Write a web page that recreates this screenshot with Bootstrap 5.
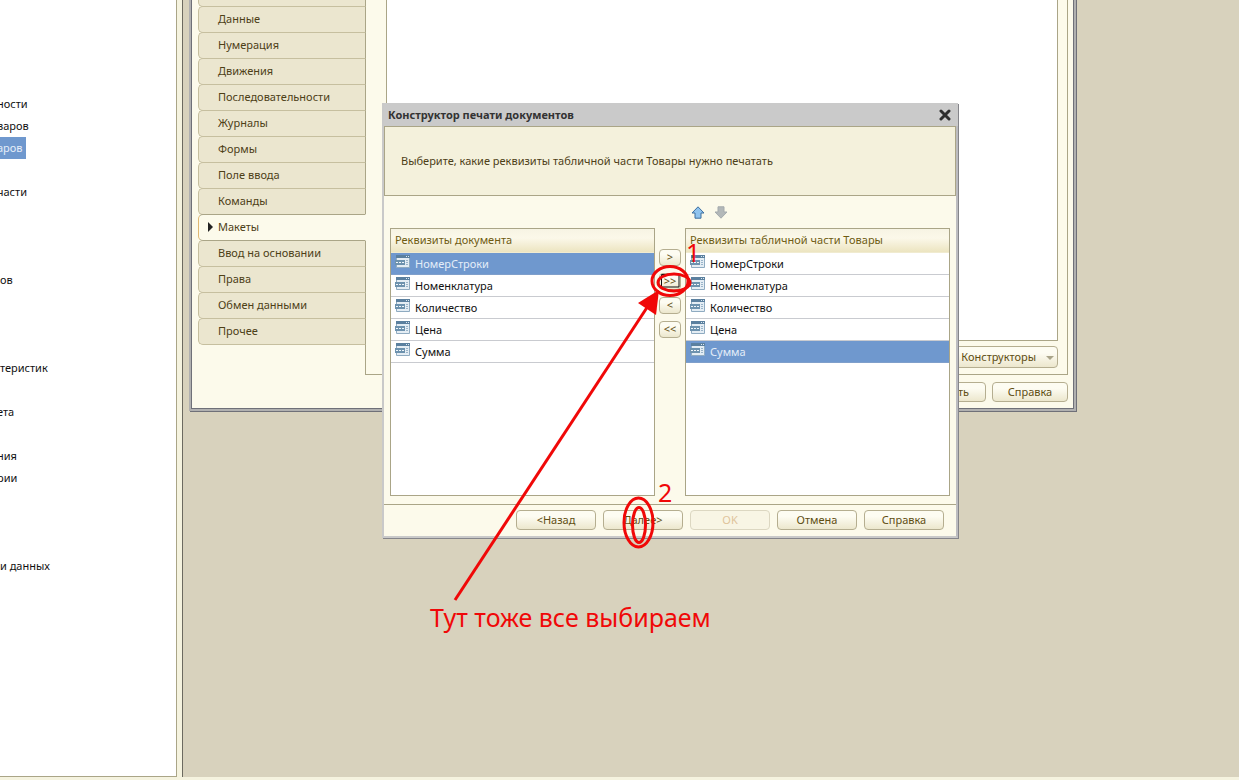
<!DOCTYPE html>
<html lang="ru">
<head>
<meta charset="utf-8">
<meta name="viewport" content="width=device-width, initial-scale=1">
<title>Конструктор печати документов</title>
<link href="https://cdn.jsdelivr.net/npm/bootstrap@5.3.0/dist/css/bootstrap.min.css" rel="stylesheet">
<style>
:root{--cream:#fcfaeb;--line:#aaa587;--ink:#4d4017;--sel:#6f98ce}
body{font-family:"Noto Sans",sans-serif;font-size:11px;line-height:16px;color:var(--ink);background:#f5f3df;padding-bottom:3px}
a{color:inherit;text-decoration:none}
.tree-pane{width:177px;border-right:1px solid var(--line);border-bottom:1px solid var(--line);background:#fff;color:#111;padding-top:93px}
.tree-pane a{display:block;width:max-content;height:22px;line-height:22px;padding-right:3px;white-space:nowrap}
.tree-pane a.outer{margin-left:-3px}
.tree-pane a.chosen{background:var(--sel);color:#e4edf8}
.desktop{background:#d8d2bd;border-left:1px solid #6c6a60;margin-left:5px}
.win{position:absolute;background:var(--cream)}
.main-win{left:6px;top:-22px;width:887px;height:433px;border:2px solid #b0b0b0;box-shadow:inset 0 0 0 1px #6f7078,1px 1px 0 #6f7078;padding:0 6px 7px 7px}
.tab-list{width:167px}
.tab-list a{display:block;height:27px;margin-bottom:-1px;line-height:24px;padding-left:19px;background:#ebe6cf;border:1px solid #c6bf9f;border-right-color:var(--line);border-radius:5px 0 0 5px;width:168px;position:relative}
.tab-list a.current{background:var(--cream);border-color:var(--line) var(--cream) var(--line) #e0b873;z-index:1}
.tab-list a.current::before{content:"";position:absolute;left:9px;top:7px;border:5px solid transparent;border-left-color:#222;border-right:0}
.tab-page{border:1px solid var(--line);padding:0 9px 6px 20px}
.tab-box{border:1px solid var(--line);background:#fff}
.btn1c{font-size:11px;line-height:16px;height:20px;padding:0 4px 1px;color:#5f4e12;border:1px solid #b5ae90;border-radius:4px;background:linear-gradient(#fdfcf2 30%,#ece7cd);white-space:nowrap}
.btn1c:disabled{color:#dfc49b;border-color:#dcd7c1;background:#f8f5e4;opacity:1}
.wide{width:76px}
.drop{height:22px;width:110px;text-align:right;padding-right:3px}
.drop-row{padding-top:5px;line-height:0}
.main-foot{gap:6px;padding-top:7px}
.caret-dn{display:inline-block;border:4px solid transparent;border-top-color:#a9a489;border-bottom:0;margin-left:7px;vertical-align:1px}
.dialog1c{left:199px;top:103px;width:576px;border:2px solid #c9c9c9;border-top:0;border-right-color:#bcbcc0;box-shadow:1px 1px 0 #85858a;z-index:3;padding-bottom:6px}
.title-bar{height:23px;background:#cacaca;color:#333;font-weight:700;padding:0 4px;margin-right:-2px}
.title-bar button{border:0;background:none;padding:0;line-height:0;margin-right:3px}
.intro{height:70px;border:1px solid var(--line);background:#f4f1dc;padding-left:16px}
.tools{height:32px;padding:10px 0 0 306px}
.tools button{border:0;background:none;padding:0;width:15px;height:13px;line-height:0}
.panels{padding:0 6px 8px}
.grid1c{flex:1 1 0;height:268px;border:1px solid var(--line);background:#fff}
.grid1c table{width:100%;border-collapse:separate;border-spacing:0}
.grid1c th{height:24px;padding:0 4px 2px;font-weight:400;color:#6f5c12;background:linear-gradient(#f7f4e4,#fbf8e9 40%,#ece4c0);border-bottom:1px solid #f0ebd0}
.grid1c td{height:22px;padding:0 4px;color:#111;border-bottom:1px solid #c9cbd0;line-height:20px}
.grid1c td svg{display:block;margin:-4px 5px 0 0}
.grid1c tr.chosen td{background:var(--sel);color:#e4edf8;border-color:#7f9fcb}
.movers{width:30px;padding:21px 4px 0;gap:7px}
.movers button{width:22px;height:17px;line-height:13px;padding:0 0 2px}
.foot{border-top:1px solid var(--line);padding:5px 12px 0 0;gap:7px}
.foot .btn1c{width:80px}
.notes{position:absolute;left:0;top:0;z-index:5;pointer-events:none}
</style>
</head>
<body class="vh-100 overflow-hidden d-flex flex-column">
<svg width="0" height="0" class="position-absolute" aria-hidden="true">
  <symbol id="attr" viewBox="0 0 15 13">
    <path d="M1.500 1H14.500V12.500H1.500Z" fill="#e4edf4" stroke="#8fabc1"/>
    <path d="M1 0H15V3H1Z" fill="#5b809f"/><path d="M11 1h1v1h-1zM13 1h1v1h-1z" fill="#dce9f3"/>
    <path d="M0 5H10V10H0Z" fill="#6d92ae"/><path d="M1 7h2v1H1zM4 7h2v1H4zM7 7h2v1H7z" fill="#f0f6fa"/>
    <path d="M11 5h2v1h-2zM11 7h2v1h-2zM11 9h2v1h-2z" fill="#9ab4c9"/>
  </symbol>
</svg>
<div class="d-flex flex-grow-1">
  <nav class="tree-pane flex-shrink-0 overflow-hidden" aria-label="Конфигурация">
    <a href="#" class="outer">ности</a><a href="#" class="outer">варов</a><a href="#" class="outer chosen">аров</a><a href="#">&nbsp;</a><a href="#" class="outer">части</a>
    <a href="#">&nbsp;</a><a href="#">&nbsp;</a><a href="#">&nbsp;</a><a href="#">ов</a><a href="#">&nbsp;</a><a href="#">&nbsp;</a><a href="#">&nbsp;</a>
    <a href="#">теристик</a><a href="#">&nbsp;</a><a href="#" class="outer">ета</a><a href="#">&nbsp;</a><a href="#" class="outer">ния</a><a href="#" class="outer">рии</a>
    <a href="#">&nbsp;</a><a href="#">&nbsp;</a><a href="#">&nbsp;</a><a href="#">и данных</a>
  </nav>
  <main class="desktop flex-grow-1 position-relative overflow-hidden">
    <section class="win main-win d-flex flex-column">
      <div class="d-flex flex-grow-1">
        <nav class="tab-list flex-shrink-0">
          <a href="#">&nbsp;</a><a href="#">Данные</a><a href="#">Нумерация</a><a href="#">Движения</a><a href="#">Последовательности</a><a href="#">Журналы</a><a href="#">Формы</a><a href="#">Поле ввода</a><a href="#">Команды</a><a href="#" class="current">Макеты</a><a href="#">Ввод на основании</a><a href="#">Права</a><a href="#">Обмен данными</a><a href="#">Прочее</a>
        </nav>
        <div class="tab-page flex-grow-1 d-flex flex-column">
          <div class="tab-box flex-grow-1"></div>
          <div class="drop-row text-end"><button class="btn1c drop" type="button">Конструкторы <span class="caret-dn"></span></button></div>
        </div>
      </div>
      <div class="main-foot d-flex justify-content-end">
        <button class="btn1c wide text-end pe-3" type="button">Закрыть</button>
        <button class="btn1c wide" type="button">Справка</button>
      </div>
    </section>

    <section class="win dialog1c" role="dialog" aria-labelledby="dlg">
      <div class="title-bar d-flex align-items-center justify-content-between">
        <span id="dlg">Конструктор печати документов</span>
        <button type="button" aria-label="Закрыть"><svg width="12" height="12" viewBox="0 0 12 12"><path d="M2 2L10 10M10 2L2 10" stroke="#2c2c2c" stroke-width="3" stroke-linecap="round"/></svg></button>
      </div>
      <div class="intro d-flex align-items-center">Выберите, какие реквизиты табличной части Товары нужно печатать</div>
      <div class="tools d-flex gap-2">
        <button type="button" aria-label="Вверх"><svg width="14" height="13" viewBox="0 0 14 13"><path d="M7 .8L13 7H10V12.200H4V7H1Z" fill="#8fc3ee" stroke="#3d6e9f" stroke-linejoin="round"/></svg></button>
        <button type="button" aria-label="Вниз"><svg width="14" height="13" viewBox="0 0 14 13"><path d="M7 12.200L13 6H10V.8H4V6H1Z" fill="#b3b8b9" stroke="#a4aaad" stroke-linejoin="round"/></svg></button>
      </div>
      <div class="panels d-flex">
        <div class="grid1c"><table>
          <thead><tr><th>Реквизиты документа</th></tr></thead>
          <tbody>
          <tr class="chosen"><td><div class="d-flex align-items-center"><svg width="15" height="13"><use href="#attr"/></svg>НомерСтроки</div></td></tr>
          <tr><td><div class="d-flex align-items-center"><svg width="15" height="13"><use href="#attr"/></svg>Номенклатура</div></td></tr>
          <tr><td><div class="d-flex align-items-center"><svg width="15" height="13"><use href="#attr"/></svg>Количество</div></td></tr>
          <tr><td><div class="d-flex align-items-center"><svg width="15" height="13"><use href="#attr"/></svg>Цена</div></td></tr>
          <tr><td><div class="d-flex align-items-center"><svg width="15" height="13"><use href="#attr"/></svg>Сумма</div></td></tr>
          </tbody></table></div>
        <div class="movers d-flex flex-column">
          <button class="btn1c" type="button">&gt;</button>
          <button class="btn1c" type="button">&gt;&gt;</button>
          <button class="btn1c" type="button">&lt;</button>
          <button class="btn1c" type="button">&lt;&lt;</button>
        </div>
        <div class="grid1c"><table>
          <thead><tr><th>Реквизиты табличной части Товары</th></tr></thead>
          <tbody>
          <tr><td><div class="d-flex align-items-center"><svg width="15" height="13"><use href="#attr"/></svg>НомерСтроки</div></td></tr>
          <tr><td><div class="d-flex align-items-center"><svg width="15" height="13"><use href="#attr"/></svg>Номенклатура</div></td></tr>
          <tr><td><div class="d-flex align-items-center"><svg width="15" height="13"><use href="#attr"/></svg>Количество</div></td></tr>
          <tr><td><div class="d-flex align-items-center"><svg width="15" height="13"><use href="#attr"/></svg>Цена</div></td></tr>
          <tr class="chosen"><td><div class="d-flex align-items-center"><svg width="15" height="13"><use href="#attr"/></svg>Сумма</div></td></tr>
          </tbody></table></div>
      </div>
      <div class="foot d-flex justify-content-end">
        <button class="btn1c" type="button">&lt;Назад</button>
        <button class="btn1c" type="button">Далее&gt;</button>
        <button class="btn1c" type="button" disabled>OK</button>
        <button class="btn1c" type="button">Отмена</button>
        <button class="btn1c" type="button">Справка</button>
      </div>
    </section>
  </main>
</div>
<svg class="notes" width="760" height="660" viewBox="0 0 760 660" fill="none" stroke="#f00808" stroke-width="3">
  <path d="M661.500 274.500H679V287H661.500Z" stroke="#111" stroke-width="1"/>
  <ellipse cx="670" cy="281" rx="18" ry="14.500"/>
  <ellipse cx="674" cy="282.500" rx="16" ry="8.500"/>
  <path d="M455 600L648 306"/>
  <path d="M659 290L656 315L638 303Z" fill="#f00808" stroke="none"/>
  <ellipse cx="638.500" cy="522.500" rx="14.500" ry="24.500"/>
  <ellipse cx="639" cy="525" rx="6.500" ry="17.500"/>
  <g fill="#f00808" stroke="none" font-family="Noto Sans, sans-serif" font-size="25">
    <text x="430" y="627">Тут тоже все выбираем</text>
    <text x="686" y="262">1</text>
    <text x="658" y="502">2</text>
  </g>
</svg>
<script src="https://cdn.jsdelivr.net/npm/bootstrap@5.3.0/dist/js/bootstrap.bundle.min.js"></script>
</body>
</html>
